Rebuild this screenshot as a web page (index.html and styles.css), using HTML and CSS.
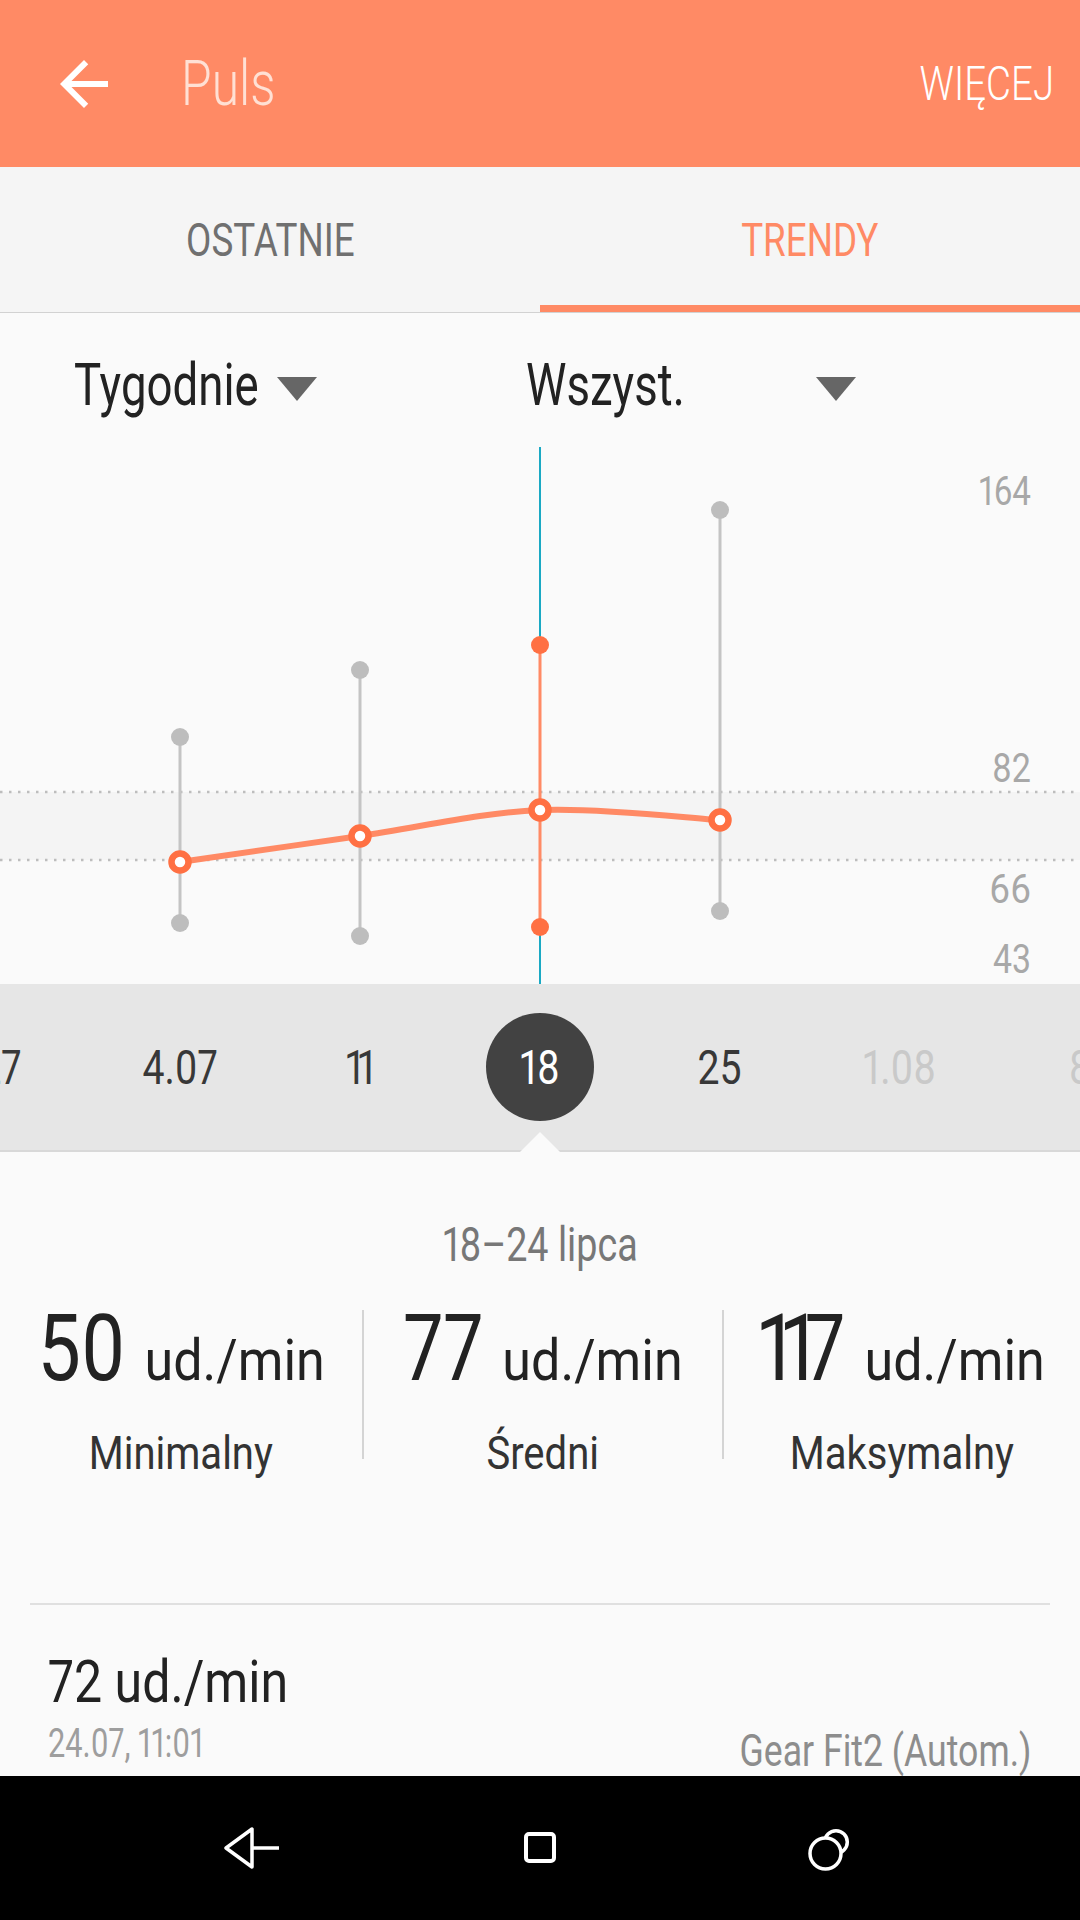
FILE: index.html
```html
<!DOCTYPE html>
<html lang="pl">
<head>
<meta charset="utf-8">
<title>Puls</title>
<link rel="stylesheet" href="styles.css">
</head>
<body>
<div class="app">
  <header class="appbar">
    <svg class="back" viewBox="0 0 24 24"><path d="M20 11H7.83l5.59-5.59L12 4l-8 8 8 8 1.41-1.41L7.83 13H20v-2z" fill="#fff"/></svg>
    <span class="title">Puls</span>
    <span class="more">WIĘCEJ</span>
  </header>

  <nav class="tabs">
    <div class="tab"><span>OSTATNIE</span></div>
    <div class="tab active"><span>TRENDY</span></div>
  </nav>

  <div class="filters">
    <div class="filter f1"><span class="filter-label"><span>Tygodnie</span></span><i class="caret"></i></div>
    <div class="filter f2"><span class="filter-label"><span>Wszyst.</span></span><i class="caret"></i></div>
  </div>

  <svg class="chart" viewBox="0 0 1080 537" width="1080" height="537">
    <rect x="0" y="345" width="1080" height="68" fill="#f4f4f4"/>
    <line x1="0" y1="345" x2="1080" y2="345" stroke="#bdbdbd" stroke-width="2.5" stroke-dasharray="2.5 6.5"/>
    <line x1="0" y1="413" x2="1080" y2="413" stroke="#bdbdbd" stroke-width="2.5" stroke-dasharray="2.5 6.5"/>
    <line x1="540" y1="0" x2="540" y2="537" stroke="#1aa9c4" stroke-width="2"/>
    <g stroke="#c4c4c4" stroke-width="3">
      <line x1="180" y1="290" x2="180" y2="476"/>
      <line x1="360" y1="223" x2="360" y2="489"/>
      <line x1="720" y1="63" x2="720" y2="464"/>
    </g>
    <line x1="540" y1="198" x2="540" y2="480" stroke="#ff8a65" stroke-width="3"/>
    <g fill="#bdbdbd">
      <circle cx="180" cy="290" r="9"/><circle cx="180" cy="476" r="9"/>
      <circle cx="360" cy="223" r="9"/><circle cx="360" cy="489" r="9"/>
      <circle cx="720" cy="63" r="9"/><circle cx="720" cy="464" r="9"/>
    </g>
    <g fill="#ff7043">
      <circle cx="540" cy="198" r="9"/><circle cx="540" cy="480" r="9"/>
    </g>
    <path d="M180 415 C210 410.7 300 397.7 360 389 C420 380.3 480 365.7 540 363 C600 360.3 690 371.3 720 373" fill="none" stroke="#ff8a65" stroke-width="6"/>
    <g fill="#fff" stroke="#ff7043" stroke-width="6.5">
      <circle cx="180" cy="415" r="8.5"/><circle cx="360" cy="389" r="8.5"/>
      <circle cx="540" cy="363" r="8.5"/><circle cx="720" cy="373" r="8.5"/>
    </g>
    <g class="axis">
      <text x="979" y="58" textLength="52" lengthAdjust="spacingAndGlyphs">164</text>
      <text x="992" y="335" textLength="39" lengthAdjust="spacingAndGlyphs">82</text>
      <text x="989" y="456" textLength="42" lengthAdjust="spacingAndGlyphs">66</text>
      <text x="993" y="526" textLength="38" lengthAdjust="spacingAndGlyphs">43</text>
    </g>
  </svg>

  <div class="dates">
    <div class="date-track">
      <div class="date-list">
        <div class="date"><span>27</span></div>
        <div class="date"><span>4.07</span></div>
        <div class="date"><span><span class="one">1</span>1</span></div>
        <div class="date current"><span class="badge"><span>18</span></span></div>
        <div class="date"><span>25</span></div>
        <div class="date future"><span>1.08</span></div>
        <div class="date future"><span>8</span></div>
      </div>
    </div>
  </div>

  <section class="summary">
    <div class="range"><span>18–24 lipca</span></div>
    <div class="stats">
      <div class="stat">
        <div class="value"><span class="vi"><span class="num">50</span><span class="unit">ud./min</span></span></div>
        <div class="label"><span>Minimalny</span></div>
      </div>
      <div class="divider"></div>
      <div class="stat">
        <div class="value"><span class="vi"><span class="num">77</span><span class="unit">ud./min</span></span></div>
        <div class="label"><span>Średni</span></div>
      </div>
      <div class="divider"></div>
      <div class="stat">
        <div class="value"><span class="vi"><span class="num"><span class="ones">11</span>7</span><span class="unit">ud./min</span></span></div>
        <div class="label"><span>Maksymalny</span></div>
      </div>
    </div>
  </section>

  <div class="sep"></div>

  <div class="reading">
    <div class="reading-value"><span>72 ud./min</span></div>
    <div class="reading-meta">
      <span class="when"><span>24.07, 11:01</span></span>
      <span class="device"><span>Gear Fit2 (Autom.)</span></span>
    </div>
  </div>

  <div class="navbar">
    <svg class="nav-back" viewBox="0 0 60 44" width="60" height="44">
      <path d="M4 22 L30 3 L30 41 Z M30 22 H57" fill="none" stroke="#fff" stroke-width="3.5" stroke-linejoin="round"/>
    </svg>
    <svg class="nav-home" viewBox="0 0 40 40" width="40" height="40">
      <rect x="6" y="6" width="28" height="27" rx="3" fill="none" stroke="#fff" stroke-width="4"/>
    </svg>
    <svg class="nav-recent" viewBox="0 0 50 50" width="50" height="50">
      <circle cx="33" cy="19" r="11.3" fill="none" stroke="#fff" stroke-width="3.5"/>
      <circle cx="22.5" cy="30.5" r="15.5" fill="#000" stroke="#fff" stroke-width="3.5"/>
    </svg>
  </div>
</div>
</body>
</html>
```

FILE: styles.css
```css
html, body {
  margin: 0;
  padding: 0;
}

body {
  width: 1080px;
  height: 1920px;
  overflow: hidden;
  background: #fafafa;
  font-family: Roboto, "Noto Sans", sans-serif;
  font-weight: 400;
  font-variant-numeric: proportional-nums;
  color: #222;
}

.app {
  display: flex;
  flex-direction: column;
  height: 1920px;
}

/* ---------- app bar ---------- */
.appbar {
  flex: 0 0 167px;
  background: #ff8a65;
  display: flex;
  align-items: center;
}

.back {
  width: 72px;
  height: 72px;
  margin-left: 48px;
}

.title {
  display: inline-block;
  margin-left: 61px;
  font-size: 63px;
  line-height: 1;
  font-weight: 300;
  color: #ffe0d4;
  transform: scaleX(0.79);
  transform-origin: left center;
}

.more {
  display: inline-block;
  margin-left: auto;
  margin-right: 26px;
  font-size: 48px;
  line-height: 1;
  font-weight: 300;
  color: #fff;
  transform: scaleX(0.8);
  transform-origin: right center;
}

/* ---------- tabs ---------- */
.tabs {
  flex: 0 0 auto;
  height: 145px;
  display: flex;
  background: #f5f5f5;
  border-bottom: 1px solid #d2d2d2;
}

.tab {
  flex: 1;
  position: relative;
  display: flex;
  align-items: center;
  justify-content: center;
  font-size: 46px;
  line-height: 1;
  color: #707070;
}

.tab span {
  display: inline-block;
  transform: scaleX(0.8);
}

.tab.active {
  color: #ff8a65;
}

.tab.active::after {
  content: "";
  position: absolute;
  left: 0;
  right: 0;
  bottom: 0;
  height: 7px;
  background: #ff8a65;
}

/* ---------- filters ---------- */
.filters {
  flex: 0 0 auto;
  height: 134px;
  box-sizing: border-box;
  padding-top: 9px;
  display: flex;
  align-items: center;
}

.filter {
  display: flex;
  align-items: center;
}

.f1 {
  margin-left: 74px;
}

.f2 {
  margin-left: 209px;
}

.filter-label {
  display: block;
  font-size: 60px;
  line-height: 1;
  color: #222;
  white-space: nowrap;
}

.f1 .filter-label {
  width: 203px;
}

.f2 .filter-label {
  width: 290px;
}

.filter-label span {
  display: inline-block;
  transform: scaleX(0.76);
  transform-origin: left center;
}

.caret {
  display: block;
  width: 0;
  height: 0;
  margin-top: 9px;
  border-left: 20px solid transparent;
  border-right: 20px solid transparent;
  border-top: 24px solid #666;
}

/* ---------- chart ---------- */
.chart {
  display: block;
  flex: 0 0 537px;
}

.axis text {
  font-family: Roboto, "Noto Sans", sans-serif;
  font-size: 41px;
  fill: #a8a8a8;
}

/* ---------- date strip ---------- */
.dates {
  flex: 0 0 auto;
  position: relative;
  height: 166px;
  background: #e6e6e6;
  border-bottom: 2px solid #d8d8d8;
  display: flex;
  align-items: center;
}

.dates::after {
  content: "";
  position: absolute;
  left: 520px;
  bottom: -2px;
  width: 0;
  height: 0;
  border-left: 20px solid transparent;
  border-right: 20px solid transparent;
  border-bottom: 20px solid #fafafa;
}

.date-track {
  width: 1080px;
  overflow: hidden;
}

.date-list {
  display: flex;
  margin-left: -90px;
}

.date {
  flex: 0 0 180px;
  height: 108px;
  display: flex;
  align-items: center;
  justify-content: center;
  font-size: 49px;
  line-height: 1;
  color: #383838;
}

.date > span {
  display: inline-block;
  transform: scaleX(0.8);
}

.date .one {
  letter-spacing: -0.12em;
}

.date.future {
  color: #c9c9c9;
}

.date .badge {
  width: 108px;
  height: 108px;
  border-radius: 50%;
  background: #424242;
  color: #fff;
  display: flex;
  align-items: center;
  justify-content: center;
  transform: none;
}

.badge span {
  display: inline-block;
  transform: scaleX(0.8);
}

/* ---------- summary ---------- */
.summary {
  flex: 0 0 auto;
}

.range {
  margin-top: 68px;
  height: 49px;
  font-size: 49px;
  line-height: 49px;
  text-align: center;
  color: #777;
}

.range span {
  display: inline-block;
  transform: scaleX(0.77);
}

.stats {
  margin-top: 33px;
  display: grid;
  grid-template-columns: 362px 2px 358px 2px minmax(0, 1fr);
}

.divider {
  margin-top: 8px;
  height: 149px;
  background: #d4d4d4;
}

.stat {
  min-width: 0;
  display: flex;
  flex-direction: column;
  align-items: center;
}

.value {
  height: 93px;
  font-size: 93px;
  line-height: 93px;
  white-space: nowrap;
  display: flex;
  justify-content: center;
  color: #222;
}

.vi {
  display: inline-block;
  transform: scaleX(0.83);
}

.ones {
  letter-spacing: -0.13em;
}

.unit {
  display: inline-block;
  font-size: 57px;
  line-height: 1;
  margin-left: 23px;
  margin-right: 20px;
  transform: scaleX(1.1);
  transform-origin: left center;
}

.label {
  margin-top: 35px;
  height: 46px;
  font-size: 46px;
  line-height: 46px;
  color: #333;
  white-space: nowrap;
}

.label span {
  display: inline-block;
  transform: scaleX(0.87);
}

.sep {
  flex: 0 0 2px;
  margin: 127px 30px 0;
  background: #e0e0e0;
}

/* ---------- latest reading ---------- */
.reading {
  flex: 0 0 auto;
  padding: 0 49px 0 48px;
}

.reading-value {
  margin-top: 47px;
  height: 59px;
  font-size: 59px;
  line-height: 59px;
  color: #222;
  white-space: nowrap;
}

.reading-value span {
  display: inline-block;
  transform: scaleX(0.85);
  transform-origin: left center;
}

.reading-meta {
  margin-top: 12px;
  display: flex;
  justify-content: space-between;
  align-items: flex-start;
  white-space: nowrap;
}

.when {
  font-size: 41px;
  line-height: 41px;
  color: #9e9e9e;
}

.when span {
  display: inline-block;
  transform: scaleX(0.75);
  transform-origin: left center;
}

.device {
  margin-top: 6px;
  font-size: 44px;
  line-height: 44px;
  color: #8d8d8d;
}

.device span {
  display: inline-block;
  transform: scaleX(0.81);
  transform-origin: right center;
}

/* ---------- system nav ---------- */
.navbar {
  margin-top: auto;
  flex: 0 0 144px;
  background: #000;
  display: grid;
  grid-template-columns: repeat(3, 288px);
  justify-content: center;
  justify-items: center;
  align-items: center;
}
```
